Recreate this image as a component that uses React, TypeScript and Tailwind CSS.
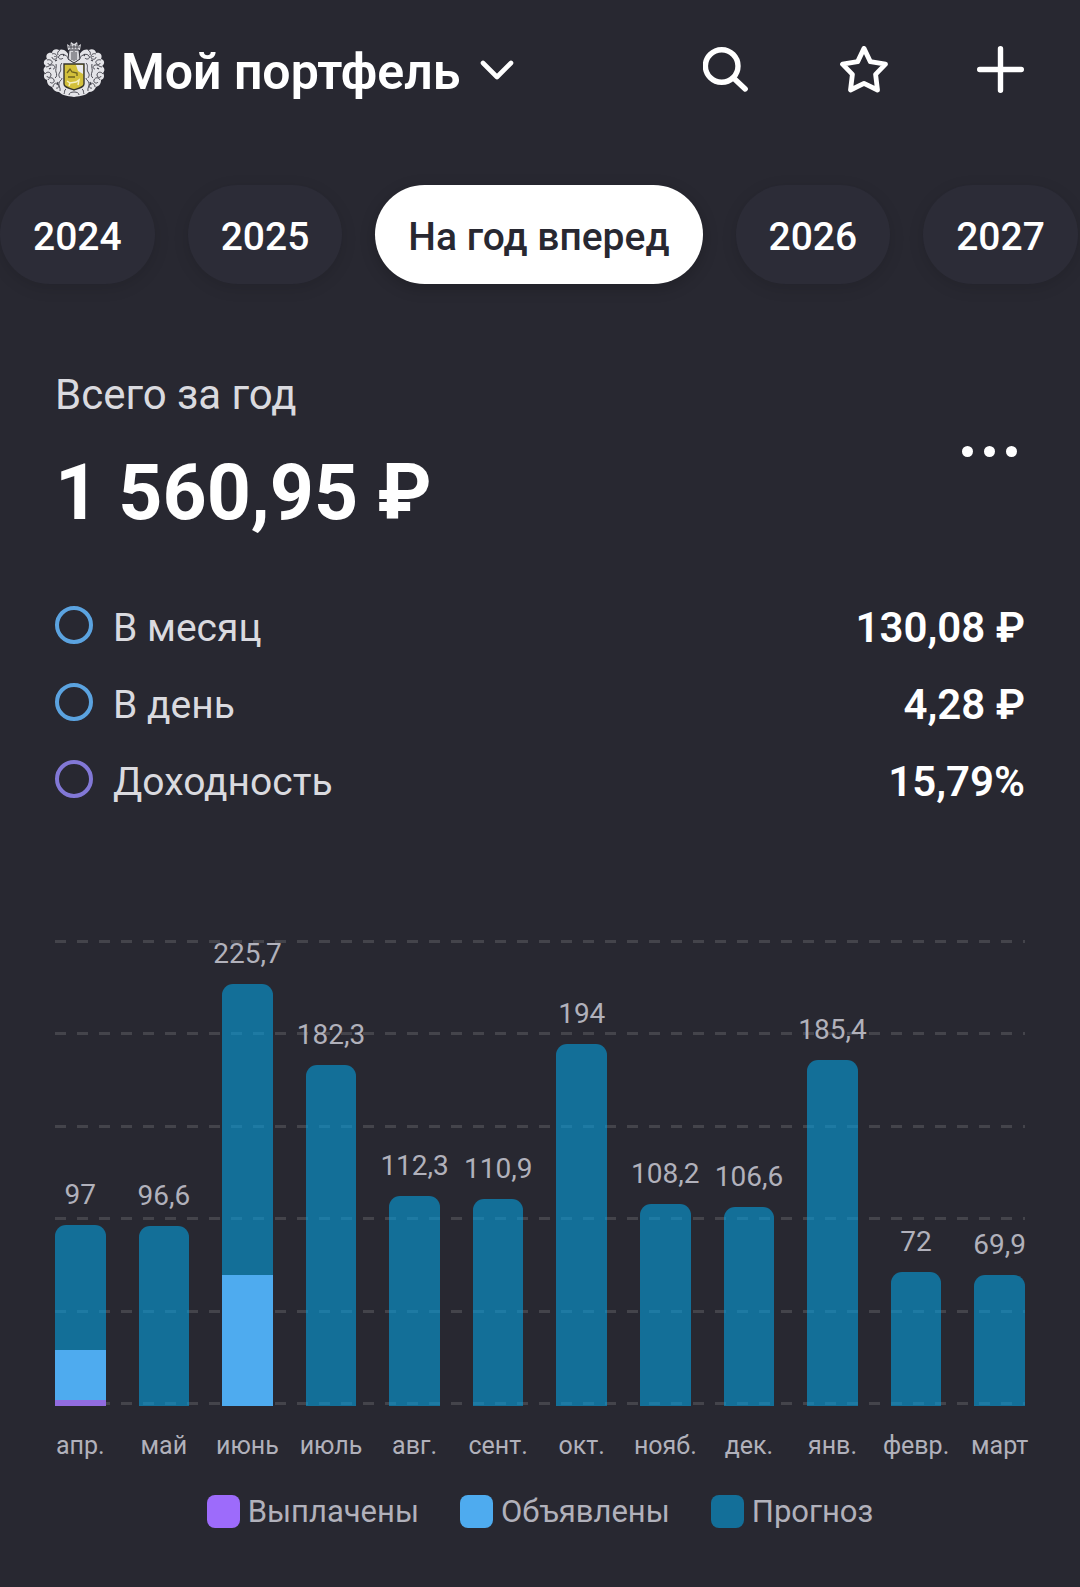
import React from "react";

type Month = {
  name: string;
  label: string;
  paid?: number;
  announced?: number;
  forecast: number;
};

const AXIS_MAX = 250;

const MONTHS: Month[] = [
  { name: "апр.", label: "97", paid: 3, announced: 27, forecast: 67 },
  { name: "май", label: "96,6", forecast: 96.6 },
  { name: "июнь", label: "225,7", announced: 70.3, forecast: 155.4 },
  { name: "июль", label: "182,3", forecast: 182.3 },
  { name: "авг.", label: "112,3", forecast: 112.3 },
  { name: "сент.", label: "110,9", forecast: 110.9 },
  { name: "окт.", label: "194", forecast: 194 },
  { name: "нояб.", label: "108,2", forecast: 108.2 },
  { name: "дек.", label: "106,6", forecast: 106.6 },
  { name: "янв.", label: "185,4", forecast: 185.4 },
  { name: "февр.", label: "72", forecast: 72 },
  { name: "март", label: "69,9", forecast: 69.9 },
];

const PERIODS = ["2024", "2025", "На год вперед", "2026", "2027"];
const ACTIVE_PERIOD = "На год вперед";

const STATS = [
  { label: "В месяц", value: "130,08 ₽", ring: "border-[#5ba3e0]" },
  { label: "В день", value: "4,28 ₽", ring: "border-[#5ba3e0]" },
  { label: "Доходность", value: "15,79%", ring: "border-[#8278d6]" },
];

const LEGEND = [
  { label: "Выплачены", color: "bg-[#9d6bfb]" },
  { label: "Объявлены", color: "bg-[#4eabef]" },
  { label: "Прогноз", color: "bg-[#136f99]" },
];

const percent = (value: number) => `${(value / AXIS_MAX) * 100}%`;

/* One side of the mantling; the other side is the same drawing mirrored. */
function Mantling() {
  return (
    <>
      <path
        d="M27 17C25 10 20 7 16 9c-3-2-7 0-7 3-4-1-7 2-5 6-4 1-4 5-1 7-3 2-3 5-1 7-2 3-1 6 2 7 0 4 2 6 5 7 1 3 4 5 7 5 3 3 7 4 15 5V17z"
        fill="#e4e4e8"
      />
      <g fill="none" stroke="#3c3c45" strokeWidth="0.9">
        <path d="M26 18c-3-5-8-6-10-3s3 4 4 2M17 9c-2 1-3 3-2 5M9 13c2-1 5 0 5 3s-5 3-5 0M4 19c3-1 6 1 5 3s-4 2-4 0" />
        <path d="M3 26c3 0 4-3 7-2s2 4 0 4M2 33c2-3 6-2 6 1s-4 3-4 1M5 39c1-3 5-3 6 0s-3 4-4 2M10 46c0-3 3-5 5-3s0 5-2 4" />
        <path d="M17 50c1-3-2-5-1-8s3-3 3-5M12 37c2-1 2-4 1-6s1-5 0-8M19 22c-3 3 0 6-2 9s-1 4 0 6" />
        <path d="M21 53c1-2 0-4 2-5M26 54c0-2 2-3 5-3" />
      </g>
      <path d="M20 13l1 2M12 20l2-1M6 28l2-1M14 44l1-3M12 15v1" stroke="#3c3c45" strokeWidth="1.2" />
    </>
  );
}

function Crest() {
  return (
    <svg viewBox="0 0 62 58" className="h-[58px] w-[62px] shrink-0" aria-hidden="true">
      <Mantling />
      <g transform="translate(62 0) scale(-1 1)">
        <Mantling />
      </g>
      <path d="M25 9l-1-6 3 2 1-4 3 2 3-2 1 4 3-2-1 6z" fill="#d5d5da" />
      <path d="M25 6h12M28 3v5M31 4v4M34 3v5" stroke="#3c3c45" strokeWidth="0.9" />
      <path d="M26 9h10l1 9-6 4-6-4z" fill="#d5d5da" stroke="#2d2d36" strokeWidth="1" />
      <path d="M29 11v8M31 10v10M33 11v8" stroke="#3c3c45" strokeWidth="0.9" />
      <path d="M21 23h20v20c0 3-4 4-10 6-6-2-10-3-10-6z" fill="#d3c03a" stroke="#35342e" strokeWidth="1.4" />
      <path d="M33 24h7v9l-5-3z" fill="#e9e9ec" />
      <path d="M24 32l3-4 2 3 5 1v3M25 36h7" fill="none" stroke="#6d621f" strokeWidth="1.3" />
      <path d="M24 40l3 2 6-1 3-2-1 5M27 42l-1 3" fill="none" stroke="#f5efc0" strokeWidth="1.5" />
    </svg>
  );
}

function Header() {
  return (
    <header className="flex h-[140px] items-center justify-between pr-[55px] pl-[43px]">
      <button type="button" className="flex items-center">
        <Crest />
        <span className="ml-4 pt-1 text-[50px] leading-[60px] font-semibold">Мой портфель</span>
        <svg viewBox="0 0 34 20" className="ml-5 h-5 w-[34px]" aria-hidden="true">
          <path d="M3 3l14 14L31 3" fill="none" stroke="currentColor" strokeWidth="4.6" strokeLinecap="round" strokeLinejoin="round" />
        </svg>
      </button>
      <div className="flex items-center gap-[89px]">
        <button type="button" aria-label="Поиск">
          <svg viewBox="0 0 48 48" className="size-12" fill="none" stroke="currentColor" strokeWidth="5.4" strokeLinecap="round">
            <circle cx="18.700" cy="20" r="16.300" />
            <path d="M30.500 32L42.200 43" />
          </svg>
        </button>
        <button type="button" aria-label="Избранное">
          <svg viewBox="0 0 48 48" className="size-12" fill="none" stroke="currentColor" strokeWidth="4.8" strokeLinejoin="round">
            <path d="M24 2.400L30.300 15.600L45.500 18.200L35.600 28.400L37.500 44L24 37.300L10.500 44L12.400 28.400L2.500 18.200L17.700 15.600Z" />
          </svg>
        </button>
        <button type="button" aria-label="Добавить">
          <svg viewBox="0 0 48 48" className="size-12" fill="none" stroke="currentColor" strokeWidth="5.4" strokeLinecap="round">
            <path d="M23.500 2.700v41.600M2.700 23.500h41.600" />
          </svg>
        </button>
      </div>
    </header>
  );
}

function Periods() {
  return (
    <nav className="mt-[45px] flex gap-[33px]" aria-label="Период">
      {PERIODS.map((period) => (
        <button
          key={period}
          type="button"
          aria-pressed={period === ACTIVE_PERIOD}
          className={
            period === ACTIVE_PERIOD
              ? "h-[99px] shrink-0 rounded-full bg-white px-[33px] pt-1.5 text-[39px] leading-none font-medium whitespace-nowrap text-[#282831] shadow-[0_4px_16px_rgba(0,0,0,0.2)]"
              : "h-[99px] shrink-0 rounded-full bg-[#2c2c37] px-[33px] pt-1.5 text-[39px] leading-none font-medium whitespace-nowrap shadow-[0_4px_16px_rgba(0,0,0,0.12)]"
          }
        >
          {period}
        </button>
      ))}
    </nav>
  );
}

function Summary() {
  return (
    <section className="mt-[86px] px-[55px]">
      <div className="flex items-center justify-between">
        <div>
          <h2 className="text-[42px] leading-[50px] text-[#dadadf]">Всего за год</h2>
          <p className="mt-[26px] text-[77px] leading-[94px] font-bold">1 560,95 ₽</p>
        </div>
        <button type="button" aria-label="Ещё" className="flex gap-[11px] px-2 pb-2">
          <span className="size-[11px] rounded-full bg-white" />
          <span className="size-[11px] rounded-full bg-white" />
          <span className="size-[11px] rounded-full bg-white" />
        </button>
      </div>
      <dl className="mt-[49px]">
        {STATS.map((stat) => (
          <div key={stat.label} className="flex h-[77px] items-center justify-between">
            <dt className="flex items-center gap-5 text-[39px] leading-[48px] text-[#dadadf]">
              <span className={`mb-1.5 size-[38px] rounded-full border-4 ${stat.ring}`} />
              {stat.label}
            </dt>
            <dd className="text-[42px] leading-[48px] font-semibold">{stat.value}</dd>
          </div>
        ))}
      </dl>
    </section>
  );
}

function Chart() {
  return (
    <section className="mt-[119px] px-[55px] text-[#b1b1bb]">
      <div className="relative h-[467px]">
        <div className="absolute inset-x-0 inset-y-px flex flex-col justify-between" aria-hidden="true">
          {[5, 4, 3, 2, 1, 0].map((line) => (
            <div
              key={line}
              className="h-[3px] bg-[repeating-linear-gradient(90deg,#44444b_0_11px,transparent_11px_22px)]"
            />
          ))}
        </div>
        <div className="relative flex h-full items-end gap-[33px]">
          {MONTHS.map((month) => (
            <div key={month.name} className="flex h-full min-w-0 flex-1 flex-col items-center justify-end">
              <span className="mb-3.5 text-[28px] leading-[32px] whitespace-nowrap">{month.label}</span>
              <div
                className="w-full shrink-0 rounded-t-[11px] bg-[#059ede]/60"
                style={{ height: percent(month.forecast) }}
              />
              {month.announced && (
                <div className="w-full shrink-0 bg-[#4eabef]" style={{ height: percent(month.announced) }} />
              )}
              {month.paid && <div className="w-full shrink-0 bg-[#916ce0]" style={{ height: percent(month.paid) }} />}
            </div>
          ))}
        </div>
      </div>
      <div className="mt-6 flex gap-[33px]">
        {MONTHS.map((month) => (
          <div key={month.name} className="flex min-w-0 flex-1 flex-col items-center text-[25px] leading-[32px]">
            <span className="whitespace-nowrap">{month.name}</span>
          </div>
        ))}
      </div>
      <ul className="mt-[33px] flex justify-center gap-[41px]">
        {LEGEND.map((item) => (
          <li key={item.label} className="flex items-center gap-2 text-[31px] leading-[33px]">
            <span className={`size-[33px] rounded-lg ${item.color}`} />
            {item.label}
          </li>
        ))}
      </ul>
    </section>
  );
}

export default function App() {
  return (
    <main className="min-h-screen overflow-hidden bg-[#282831] pb-[60px] font-[Roboto,'Noto_Sans',sans-serif] text-white">
      <Header />
      <Periods />
      <Summary />
      <Chart />
    </main>
  );
}
